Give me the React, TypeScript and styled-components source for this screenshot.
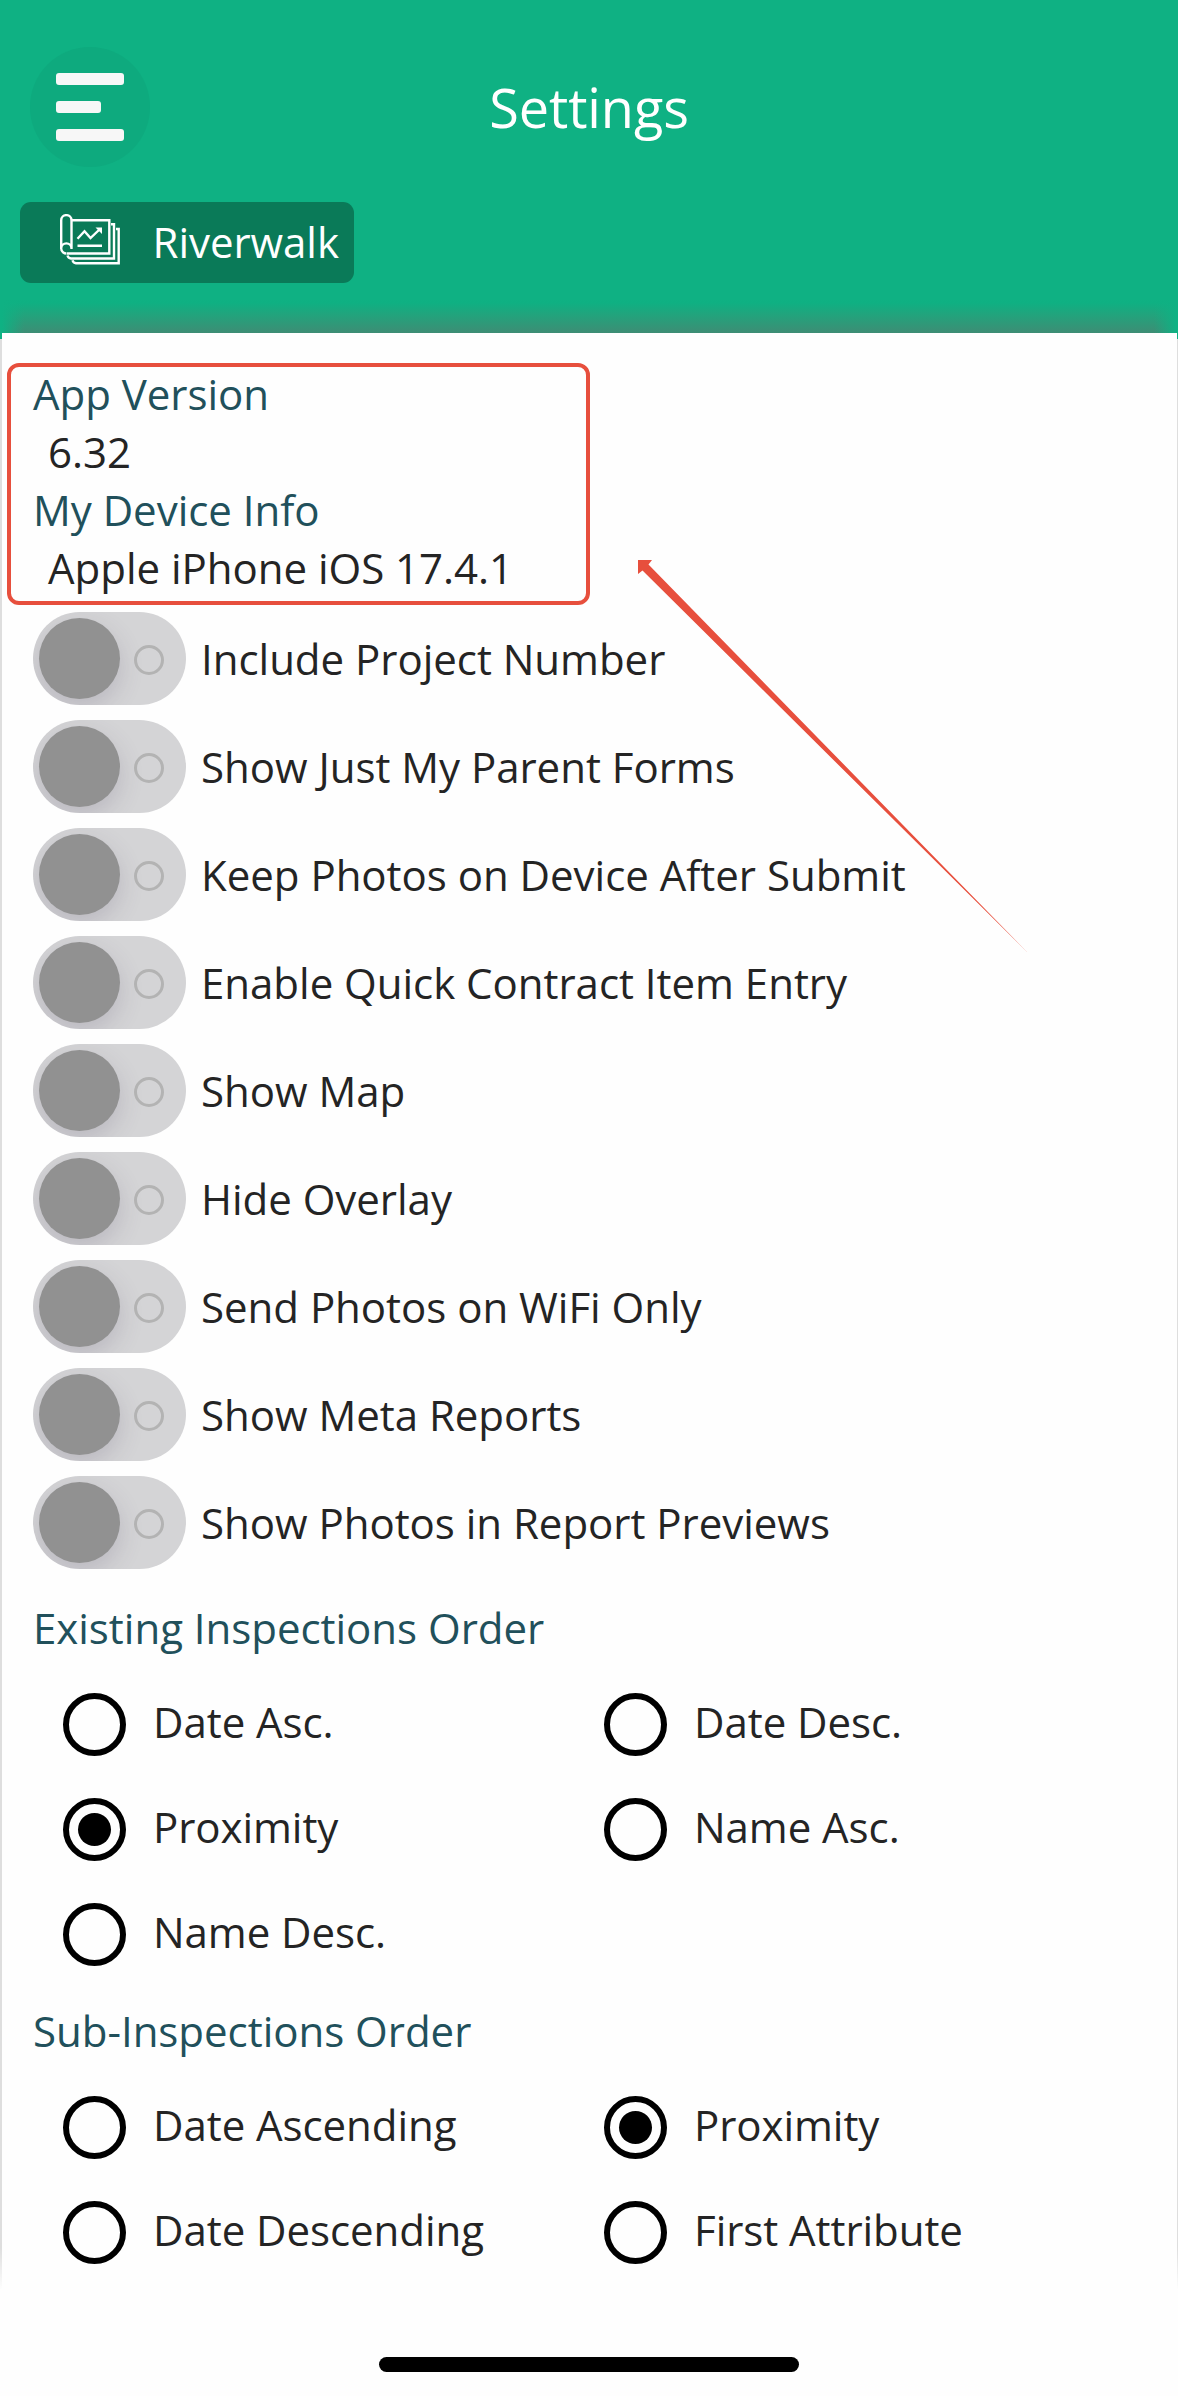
import React from "react";
import styled, { createGlobalStyle } from "styled-components";

const GlobalStyle = createGlobalStyle`
  * { box-sizing: border-box; }
  html, body { margin: 0; padding: 0; background: #fefefe; }
  body {
    font-family: "Open Sans", "Noto Sans", sans-serif;
    font-size: 42px;
    line-height: 58px;
    letter-spacing: -0.02px;
    color: #242424;
  }
  h1, h2, p { margin: 0; font-weight: 400; }
`;

const Screen = styled.div`
  width: 1178px;
  height: 2396px;
  display: flex;
  flex-direction: column;
  overflow: hidden;
  background: #fefefe;
`;

const Header = styled.header`
  height: 339px;
  flex: none;
  padding: 47px 19.5px 0;
  background:
    linear-gradient(to right, #0fb183 2px, rgba(15, 177, 131, 0) 24px calc(100% - 24px), #0fb183 calc(100% - 2px)),
    linear-gradient(#0fb183 0 299px, #0fb082 303px, #24a27c 316px, #3d8d74 333px);
  color: #fff;
`;

const TitleBar = styled.div`
  display: grid;
  grid-template-columns: 120px 1fr 120px;
  align-items: center;
  padding: 0 10.5px;
  height: 120px;
`;

const MenuButton = styled.button`
  width: 120px;
  height: 120px;
  border: 0;
  border-radius: 50%;
  background: #0eaa7e;
  padding: 26px;
  display: flex;
  flex-direction: column;
  gap: 16.5px;
`;

const MenuBar = styled.span<{ $short?: boolean }>`
  height: 11.5px;
  width: ${(p) => (p.$short ? 45 : 68)}px;
  border-radius: 3px;
  background: #f7f7f7;
`;

const Title = styled.h1`
  font-size: 54px;
  line-height: 74px;
  letter-spacing: -0.08px;
  text-align: center;
`;

const ProjectChip = styled.button`
  margin-top: 34.5px;
  height: 81px;
  width: 334.5px;
  border: 0;
  border-radius: 11px;
  background: #0a7a58;
  color: #fff;
  font: inherit;
  letter-spacing: -0.04px;
  padding: 0 0 0 40px;
  display: flex;
  align-items: center;
  gap: 32px;
  svg { flex: none; margin-bottom: 4px; }
`;

const Panel = styled.main`
  height: 1967px;
  margin-top: -6px;
  flex: none;
  padding: 30px 0 0 7px;
  background:
    linear-gradient(transparent 6px, #dedede 6px 1915px, #fefefe 1957px) left / 2px 100% no-repeat,
    linear-gradient(transparent 6px, #dedede 6px 1915px, #fefefe 1957px) right / 1px 100% no-repeat,
    linear-gradient(#fefefe, #fefefe) 2px 0 / calc(100% - 3px) 100% no-repeat;
`;

const InfoBox = styled.section`
  width: 583px;
  height: 242px;
  border: 4px solid #e74f3d;
  border-radius: 12px;
  padding: 0 22px 4px;
  display: flex;
  flex-direction: column;
  justify-content: flex-end;
`;

const SectionTitle = styled.h2`
  font-size: 42px;
  line-height: 58px;
  color: #21505b;
`;

const InfoValue = styled.p`
  padding-left: 15px;
`;

const ToggleList = styled.div`
  padding: 7px 0 0 26px;
  display: grid;
  gap: 15px;
`;

const ToggleRow = styled.div`
  display: flex;
  align-items: center;
  gap: 15px;
  height: 93px;
`;

const Track = styled.span`
  width: 153px;
  height: 93px;
  border-radius: 47px;
  background: #d4d4d6;
  padding: 0 22px 0 6px;
  display: flex;
  align-items: center;
  justify-content: space-between;
  overflow: hidden;
`;

const Knob = styled.span`
  width: 81px;
  height: 81px;
  border-radius: 50%;
  background: #919191;
  box-shadow: 0 9px 24px rgba(80, 70, 100, 0.2);
`;

const OffRing = styled.span`
  width: 30px;
  height: 30px;
  margin-top: 3px;
  border-radius: 50%;
  border: 3px solid #b3b3b3;
`;

const OrderGroup = styled.section<{ $top: number }>`
  padding: ${(p) => p.$top}px 0 0 26px;
`;

const Options = styled.div`
  padding: 15px 0 0 30px;
  display: grid;
  grid-template-columns: 541px 541px;
  grid-auto-rows: 105px;
  align-items: center;
`;

const Option = styled.label`
  display: flex;
  align-items: center;
  gap: 27px;
`;

const OptionText = styled.span`
  letter-spacing: -0.05px;
  padding-bottom: 5px;
`;

const Radio = styled.span<{ $on?: boolean }>`
  width: 63px;
  height: 63px;
  border: 6px solid #000;
  border-radius: 50%;
  display: grid;
  place-items: center;
  &::after {
    content: "";
    width: 33px;
    height: 33px;
    border-radius: 50%;
    background: ${(p) => (p.$on ? "#000" : "transparent")};
  }
`;

const HomeArea = styled.footer`
  flex: 1;
  padding-top: 57px;
  display: flex;
  justify-content: center;
`;

const HomeIndicator = styled.span`
  width: 420px;
  height: 15px;
  border-radius: 8px;
  background: #000;
`;

const Arrow = styled.svg`
  position: absolute;
  left: 638px;
  top: 560px;
`;

const toggles = [
  "Include Project Number",
  "Show Just My Parent Forms",
  "Keep Photos on Device After Submit",
  "Enable Quick Contract Item Entry",
  "Show Map",
  "Hide Overlay",
  "Send Photos on WiFi Only",
  "Show Meta Reports",
  "Show Photos in Report Previews",
];

const existing = ["Date Asc.", "Date Desc.", "Proximity", "Name Asc.", "Name Desc."];
const sub = ["Date Ascending", "Proximity", "Date Descending", "First Attribute"];

const PlansIcon = () => (
  <svg width="61" height="52" viewBox="0 0 61 52" fill="none" stroke="#fff" strokeWidth="2.4">
    <path d="M11.500 6.300H49.300V39.500H7M11.500 6.300V35M1.200 35V6.300a5.150 5.150 0 0 1 10.300 0V35M1.200 35a5.300 5.300 0 0 0 5.300 4.500M1.200 34.500a5.150 5.150 0 0 1 10.300 0" />
    <path d="M51 10.300H54V44.500H11a4 4 0 0 1-3.500-3M56 15H58.700V49.300H16a4 4 0 0 1-3.500-3" />
    <path d="M17.500 24.700L24.500 17.300L30.500 24L40 15M17.500 31.700H42" />
    <path d="M35.500 13.500H42V20Z" fill="#fff" stroke="none" />
  </svg>
);

function OrderOptions({ items, selected }: { items: string[]; selected: string }) {
  return (
    <Options>
      {items.map((item) => (
        <Option key={item}>
          <Radio $on={item === selected} />
          <OptionText>{item}</OptionText>
        </Option>
      ))}
    </Options>
  );
}

export default function App() {
  return (
    <>
      <GlobalStyle />
      <Screen>
        <Header>
          <TitleBar>
            <MenuButton aria-label="Menu">
              <MenuBar />
              <MenuBar $short />
              <MenuBar />
            </MenuButton>
            <Title>Settings</Title>
          </TitleBar>
          <ProjectChip>
            <PlansIcon />
            <span>Riverwalk</span>
          </ProjectChip>
        </Header>
        <Panel>
          <InfoBox>
            <SectionTitle>App Version</SectionTitle>
            <InfoValue>6.32</InfoValue>
            <SectionTitle>My Device Info</SectionTitle>
            <InfoValue>Apple iPhone iOS 17.4.1</InfoValue>
          </InfoBox>
          <ToggleList>
            {toggles.map((label) => (
              <ToggleRow key={label}>
                <Track>
                  <Knob />
                  <OffRing />
                </Track>
                <span>{label}</span>
              </ToggleRow>
            ))}
          </ToggleList>
          <OrderGroup $top={30}>
            <SectionTitle>Existing Inspections Order</SectionTitle>
            <OrderOptions items={existing} selected="Proximity" />
          </OrderGroup>
          <OrderGroup $top={15}>
            <SectionTitle>Sub-Inspections Order</SectionTitle>
            <OrderOptions items={sub} selected="Proximity" />
          </OrderGroup>
        </Panel>
        <HomeArea>
          <HomeIndicator />
        </HomeArea>
      </Screen>
      <Arrow width="391" height="394" viewBox="0 0 391 394" fill="#e74f3d">
        <path d="M0 0H14L10.500 4.500L390 393L4.500 10.500L0 14Z" />
      </Arrow>
    </>
  );
}
